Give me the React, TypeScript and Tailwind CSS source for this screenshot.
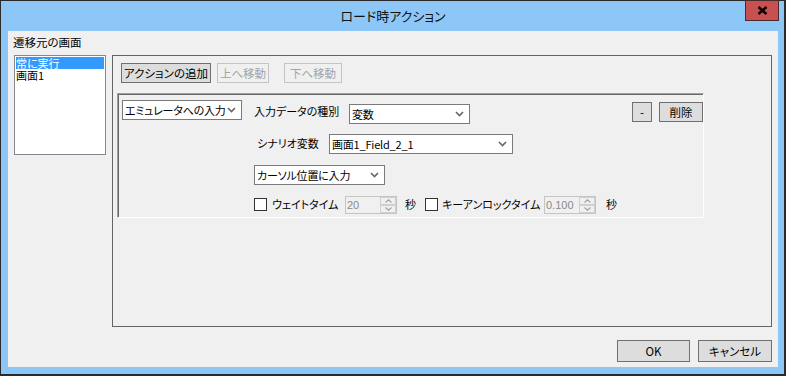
import React from "react";

const F = "font-['Noto_Sans_CJK_JP','Liberation_Sans',sans-serif] [font-feature-settings:'palt']";

function Chevron() {
  return (
    <svg width="9" height="6" viewBox="0 0 9 6" className="shrink-0">
      <path d="M1 1 L4.5 4.5 L8 1" fill="none" stroke="#666" strokeWidth="1.6" />
    </svg>
  );
}

function Dropdown({ text, w, cls = "" }: { text: string; w: string; cls?: string }) {
  return (
    <div
      className={`${w} ${cls} h-[20px] bg-white border border-[#7a7a7a] flex items-center pl-[2px] pr-[5px] text-[11px] leading-[14px] tracking-[-0.2px] text-black shrink-0`}
    >
      <span className="flex-1 whitespace-nowrap">{text}</span>
      <Chevron />
    </div>
  );
}

function Btn({ text, w, cls = "", disabled = false }: { text: string; w: string; cls?: string; disabled?: boolean }) {
  return (
    <div
      className={`${w} ${cls} h-[20px] flex items-center justify-center text-[11.5px] leading-[14px] border whitespace-nowrap shrink-0 ${
        disabled ? "border-[#c4c4c4] text-[#a3a3a3] bg-[#f0f0f0]" : "border-[#707070] text-black bg-[#dddddd]"
      }`}
    >
      {text}
    </div>
  );
}

function Spin({ value, cls = "" }: { value: string; cls?: string }) {
  return (
    <div className={`${cls} w-[52px] h-[18px] border border-[#c4c4c4] bg-[#f0f0f0] flex shrink-0`}>
      <div className="flex-1 text-[11px] leading-[16px] pl-[1px] text-[#8a8a8a] font-['Liberation_Sans',sans-serif]">
        {value}
      </div>
      <div className="w-[16px] flex flex-col">
        <div className="flex-1 border border-[#d0d0d0] bg-[#f0f0f0] flex items-center justify-center">
          <svg width="7" height="4" viewBox="0 0 7 4">
            <path d="M0.5 3.5 L3.5 0.8 L6.5 3.5" fill="none" stroke="#a0a0a0" strokeWidth="1.1" />
          </svg>
        </div>
        <div className="flex-1 border border-[#d0d0d0] bg-[#f0f0f0] flex items-center justify-center">
          <svg width="7" height="4" viewBox="0 0 7 4">
            <path d="M0.5 0.5 L3.5 3.2 L6.5 0.5" fill="none" stroke="#a0a0a0" strokeWidth="1.1" />
          </svg>
        </div>
      </div>
    </div>
  );
}

function Check({ cls = "" }: { cls?: string }) {
  return <div className={`${cls} w-[13px] h-[13px] border border-[#333333] bg-white shrink-0`} />;
}

const L = "text-[11px] leading-[14px] whitespace-nowrap shrink-0";

export default function App() {
  return (
    <div className={`${F} w-[786px] h-[376px] bg-[#8cc7f8] border-t border-l border-[#2b2b2b] border-r-[2px] border-b-[2px] flex flex-col`}>
      {/* title bar */}
      <div className="h-[30px] flex items-start">
        <div className="flex-1 h-[30px] flex items-center justify-center text-[13px] text-[#111] pl-[40px]">
          ロード時アクション
        </div>
        <div className="w-[34px] h-[21px] mr-[5px] -mt-px bg-[#c75050] border border-[#4d2a2a] flex items-center justify-center">
          <svg width="11" height="9" viewBox="0 0 11 9">
            <path d="M1.5 1 L9.5 8 M9.5 1 L1.5 8" stroke="#000" strokeWidth="2.4" />
          </svg>
        </div>
      </div>
      {/* content */}
      <div className="ml-[7px] w-[770px] h-[336px] bg-[#f0f0f0] flex flex-col">
        <div className="h-[24px] pl-[5px] pt-[2px] text-[11.5px] leading-[18px] text-black">遷移元の画面</div>
        <div className="flex">
          {/* listbox */}
          <div className="ml-[6px] w-[92px] h-[100px] bg-white border border-[#828790] p-px text-[11px] leading-[12px]">
            <div className="h-[12px] bg-[#3399ff] text-white">常に実行</div>
            <div className="h-[12px] text-black">画面1</div>
          </div>
          {/* group panel */}
          <div className="ml-[6px] w-[660px] h-[272px] border border-[#646464] flex flex-col">
            <div className="flex pt-[7px] pl-[8px]">
              <Btn text="アクションの追加" w="w-[90px]" />
              <Btn text="上へ移動" w="w-[52px]" cls="ml-[6px]" disabled />
              <Btn text="下へ移動" w="w-[58px]" cls="ml-[15px]" disabled />
            </div>
            {/* inner action panel */}
            <div className="ml-[4px] mt-[10px] w-[587px] h-[125px] border-t border-l border-[#a0a0a0] border-b border-r border-b-white border-r-white">
              <div className="w-full h-full border-t border-l border-[#696969] flex flex-col">
                {/* row 1 */}
                <div className="h-[31px] flex items-start">
                  <Dropdown text="エミュレータへの入力" w="w-[120px]" cls="ml-[3px] mt-[5px]" />
                  <div className={`ml-[12px] mt-[9px] w-[95px] ${L}`}>入力データの種別</div>
                  <Dropdown text="変数" w="w-[121px]" cls="mt-[9px]" />
                  <Btn text="-" w="w-[20px]" cls="ml-auto mt-[7px]" />
                  <Btn text="削除" w="w-[44px]" cls="ml-[7px] mt-[7px]" />
                </div>
                {/* row 2 */}
                <div className="h-[32px] flex items-start">
                  <div className={`ml-[138px] mt-[10px] w-[72px] ${L}`}>シナリオ変数</div>
                  <Dropdown text="画面1_Field_2_1" w="w-[184px]" cls="mt-[8px]" />
                </div>
                {/* row 3 */}
                <div className="h-[27px] flex items-start">
                  <Dropdown text="カーソル位置に入力" w="w-[131px]" cls="ml-[135px] mt-[7px]" />
                </div>
                {/* row 4 */}
                <div className="flex items-start">
                  <Check cls="ml-[135px] mt-[13px]" />
                  <div className={`ml-[5px] mt-[12px] w-[73px] ${L}`}>ウェイトタイム</div>
                  <Spin value="20" cls="mt-[11px]" />
                  <div className={`ml-[8px] mt-[12px] ${L}`}>秒</div>
                  <Check cls="ml-[9px] mt-[13px]" />
                  <div className={`ml-[4px] mt-[12px] w-[102px] ${L}`}>キーアンロックタイム</div>
                  <Spin value="0.100" cls="mt-[11px]" />
                  <div className={`ml-[10px] mt-[12px] ${L}`}>秒</div>
                </div>
              </div>
            </div>
          </div>
        </div>
        {/* bottom buttons */}
        <div className="flex justify-end mt-[13px] pr-[6px]">
          <Btn text="OK" w="w-[73px]" cls="h-[22px]!" />
          <Btn text="キャンセル" w="w-[74px]" cls="ml-[8px] h-[22px]!" />
        </div>
      </div>
    </div>
  );
}
